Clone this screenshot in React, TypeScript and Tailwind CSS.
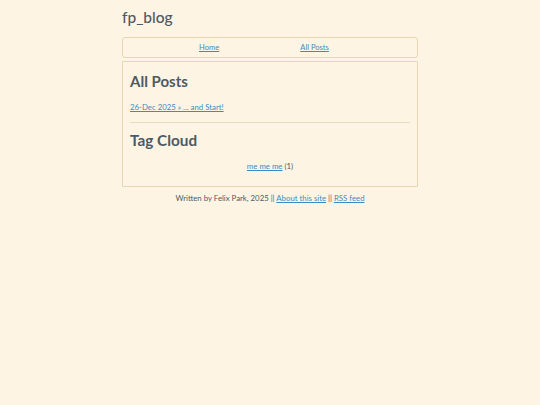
export default function App() {
  return (
    <div
      className="min-h-[405px] w-full bg-[#fef4e4] text-[#4c5a63]"
      style={{ fontFamily: "Lato, 'Noto Sans', sans-serif" }}
    >
      <div className="mx-auto w-[296px] pt-[8px]">
        {/* site title */}
        <h1 className="h-[29px] text-[15.5px] leading-[18px] font-medium">fp_blog</h1>

        {/* nav */}
        <nav className="flex h-[21px] items-center rounded-[3px] border border-[#e5d6b3] text-[7.6px]">
          <a href="#" className="ml-[76px] text-[#3d8cc0] underline">
            Home
          </a>
          <a href="#" className="ml-[81px] text-[#3d8cc0] underline">
            All Posts
          </a>
        </nav>

        {/* main */}
        <main className="mt-[3px] rounded-[1px] border border-[#e5d6b3] px-[7px] pt-[8px] pb-[14px]">
          <h2 className="text-[15px] leading-[22px] font-bold">All Posts</h2>
          <div className="mt-[9px] text-[7.8px] leading-[12px]">
            <a href="#" className="text-[#3d8cc0] underline">
              26-Dec 2025 » ... and Start!
            </a>
          </div>
          <hr className="mt-[9px] border-[#e8dcc0]" />
          <h2 className="mt-[6px] text-[15.3px] leading-[22px] font-bold">Tag Cloud</h2>
          <div className="mt-[9px] text-center text-[7.8px] leading-[12px]">
            <a href="#" className="text-[#3d8cc0] underline">
              me me me
            </a>{" "}
            (1)
          </div>
        </main>

        {/* footer */}
        <footer className="mt-[5px] text-center text-[7.8px] leading-[12px]">
          Written by Felix Park, 2025 ||{" "}
          <a href="#" className="text-[#3d8cc0] underline">
            About this site
          </a>{" "}
          ||{" "}
          <a href="#" className="text-[#3d8cc0] underline">
            RSS feed
          </a>
        </footer>
      </div>
    </div>
  );
}
